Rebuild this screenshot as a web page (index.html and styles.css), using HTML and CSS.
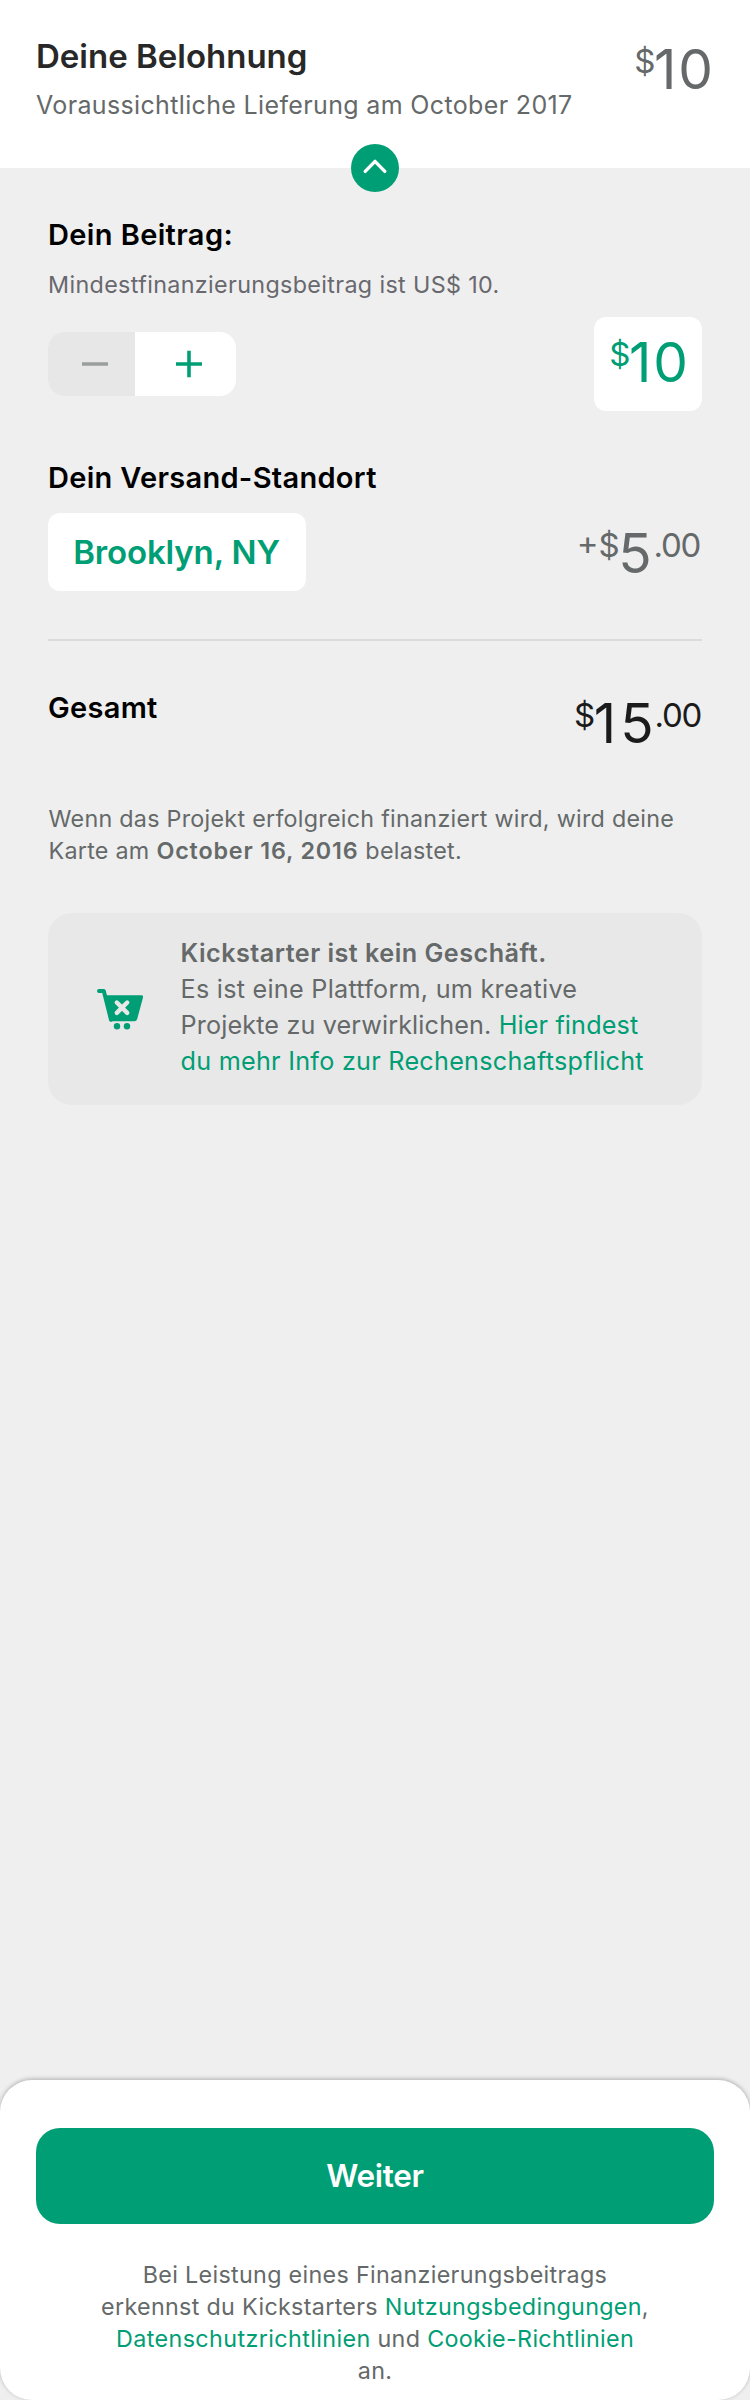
FILE: index.html
```html
<!DOCTYPE html>
<html lang="de">
<head>
<meta charset="utf-8">
<title>Deine Belohnung</title>
<link rel="stylesheet" href="styles.css">
</head>
<body>
<div class="page">
  <header class="header">
    <div class="reward">
      <h1 class="title">Deine Belohnung</h1>
      <p class="delivery">Voraussichtliche Lieferung am October 2017</p>
    </div>
    <div class="money money-header"><span class="minor currency">$</span><span class="major">10</span></div>
    <button class="collapse" aria-label="Einklappen">
      <svg width="48" height="48" viewBox="0 0 48 48"><path d="M14.2 27.4 24 17.4 33.8 27.4" fill="none" stroke="#fff" stroke-width="3.4" stroke-linecap="round" stroke-linejoin="round"/></svg>
    </button>
  </header>

  <main class="content">
    <section>
      <h2 class="heading heading-pledge">Dein Beitrag:</h2>
      <p class="note minimum">Mindestfinanzierungsbeitrag ist US$ 10.</p>
      <div class="row amount-row">
        <div class="stepper">
          <button class="step minus" aria-label="Weniger"><svg width="28" height="28" viewBox="0 0 28 28"><path d="M1 14H27" stroke="#9b9e9e" stroke-width="3.6"/></svg></button>
          <button class="step plus" aria-label="Mehr"><svg width="28" height="28" viewBox="0 0 28 28"><path d="M1 14H27M14 .7V27.3" stroke="#009e74" stroke-width="3.6"/></svg></button>
        </div>
        <div class="money amount"><span class="minor currency">$</span><span class="major">10</span></div>
      </div>
    </section>

    <section class="shipping">
      <h2 class="heading heading-shipping">Dein Versand-Standort</h2>
      <div class="row shipping-row">
        <button class="location">Brooklyn, NY</button>
        <div class="money money-shipping"><span class="minor currency">+$</span><span class="major">5</span><span class="minor cents">.00</span></div>
      </div>
    </section>

    <section class="row total">
      <h2 class="heading heading-total">Gesamt</h2>
      <div class="money money-total"><span class="minor currency">$</span><span class="major">15</span><span class="minor cents">.00</span></div>
    </section>

    <p class="note charge">Wenn das Projekt erfolgreich finanziert wird, wird deine<br>Karte am <strong>October 16, 2016</strong> belastet.</p>

    <aside class="info">
      <svg class="cart" width="46" height="41" viewBox="0 0 46 41">
        <path d="M2 2H6.8L14 30.8" fill="none" stroke="#009e74" stroke-width="4" stroke-linecap="round" stroke-linejoin="round"/>
        <path d="M7.5 6.2H44.3Q46.6 6.2 46 8.5L40.2 30Q39.5 32.2 37.4 32.2H14.6Q12.6 32.2 12.2 30Z" fill="#009e74"/>
        <path d="M19.8 13.5 30.2 23.9M30.2 13.5 19.8 23.9" stroke="#e8e8e8" stroke-width="4.4" stroke-linecap="round"/>
        <circle cx="20" cy="37.2" r="3.2" fill="#009e74"/><circle cx="30" cy="37.2" r="3.2" fill="#009e74"/>
      </svg>
      <p class="info-text"><strong>Kickstarter ist kein Geschäft.</strong><br>Es ist eine Plattform, um kreative<br><span class="tight">Projekte zu verwirklichen. <a>Hier findest</a></span><br><a>du mehr Info zur Rechenschaftspflicht</a></p>
    </aside>
  </main>

  <footer class="footer">
    <button class="continue">Weiter</button>
    <p class="note legal">Bei Leistung eines Finanzierungsbeitrags<br>erkennst du Kickstarters <a>Nutzungsbedingungen</a>,<br><a class="wide">Datenschutzrichtlinien</a> und <a>Cookie-Richtlinien</a><br>an.</p>
  </footer>
</div>
</body>
</html>
```

FILE: styles.css
```css
* { box-sizing: border-box; margin: 0; padding: 0; }
body { background: #efefef; font-family: "Inter", "Liberation Sans", sans-serif; color: #656969; white-space: nowrap; }
button { border: 0; background: none; font: inherit; display: flex; align-items: center; justify-content: center; }
strong { font-weight: 600; }
a { color: #009e74; }

.page { width: 750px; height: 2400px; display: flex; flex-direction: column; overflow: hidden; }

.header { position: relative; height: 168px; padding: 36px 35px 0 36px; background: #fff; display: flex; justify-content: space-between; align-items: flex-start; }
.title { font-size: 33px; line-height: 40px; font-weight: 600; color: #282828; }
.delivery { margin-top: 13px; font-size: 25px; line-height: 32px; letter-spacing: .35px; }
.collapse { position: absolute; left: 351px; top: 144px; width: 48px; height: 48px; border-radius: 50%; background: #009e74; }

.money { display: flex; align-items: flex-start; }
.major { font-size: 55px; line-height: 55px; letter-spacing: 2px; }
.minor { font-size: 33px; line-height: 39px; }
.currency { margin-right: -1.5px; }
.cents { letter-spacing: -1.3px; margin-left: 2px; }
.money-header { margin-top: 6px; }
.money-shipping { padding: 13px 2px 0 0; }
.money-shipping .major { letter-spacing: 0; }
.money-total { padding: 6px 1px 0 0; color: #1b1b1b; }
.money-total .major { letter-spacing: 4px; }
.money-total .cents { margin-left: -3px; }

.content { flex: 1; padding: 48px 48px 0; }
.row { display: flex; justify-content: space-between; align-items: flex-start; }
.heading { font-size: 29px; line-height: 36px; font-weight: 600; color: #000; }
.heading-pledge { padding-top: 1px; letter-spacing: .38px; }
.heading-shipping { padding-top: 1px; letter-spacing: .3px; }
.heading-total { letter-spacing: .3px; }
.note { font-size: 23.3px; line-height: 32px; letter-spacing: .32px; }
.minimum { margin-top: 16px; color: #68686e; letter-spacing: .36px; }

.amount-row { margin-top: 16px; align-items: center; }
.stepper { display: flex; width: 188px; height: 64px; border-radius: 16px; overflow: hidden; background: #fff; }
.step { height: 64px; }
.minus { width: 87px; background: #e7e7e7; padding-left: 7px; }
.plus { width: 101px; padding-left: 7px; }
.amount { width: 108px; height: 94px; padding: 18px 12px 0 0; justify-content: flex-end; border-radius: 12px; background: #fff; color: #009e74; }

.shipping { margin-top: 48px; padding-bottom: 48px; border-bottom: 2px solid #dbdbdb; }
.shipping-row { margin-top: 17px; }
.location { width: 258px; height: 78px; padding-right: 1px; border-radius: 12px; background: #fff; color: #009e74; font-size: 33px; font-weight: 600; letter-spacing: -.14px; }

.total { margin-top: 49px; }
.charge { margin-top: 52px; padding-left: .5px; letter-spacing: .27px; }
.charge strong { letter-spacing: .85px; }

.info { margin-top: 46px; height: 192px; border-radius: 24px; background: #e8e8e8; display: flex; align-items: center; padding: 0 0 0 49px; }
.cart { overflow: visible; }
.info-text { margin: 0 0 4px 37.5px; font-size: 25.2px; line-height: 36px; letter-spacing: .26px; }
.info-text strong { letter-spacing: .48px; }
.info-text .tight { letter-spacing: .14px; }

.footer { height: 320px; padding: 48px 36px 0; border-radius: 32px; background: #fff; box-shadow: 0 -1px 4px rgba(0, 0, 0, .28); }
.continue { width: 678px; height: 96px; padding-bottom: 1px; border-radius: 24px; background: #009e74; color: #fff; font-size: 31.5px; font-weight: 600; letter-spacing: -.3px; }
.legal { margin-top: 35px; text-align: center; }
.legal .wide { letter-spacing: .4px; }
```
